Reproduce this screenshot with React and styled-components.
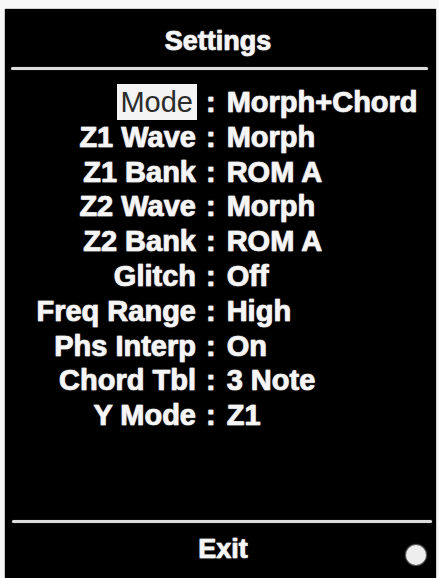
import React from "react";
import styled, { createGlobalStyle } from "styled-components";

const Global = createGlobalStyle`
  html, body { margin: 0; padding: 0; background: #f6f6f6; overflow: hidden; }
  body { font-family: "Liberation Sans", Arial, sans-serif; }
  #root { width: 439px; height: 578px; }
`;

const Frame = styled.div`
  width: 439px;
  height: 578px;
  padding: 9px 3px 0 5px;
  box-sizing: border-box;
  background: #f7f7f7;
`;

const Screen = styled.div`
  width: 431px;
  height: 569px;
  background: #000;
  display: flex;
  flex-direction: column;
  color: #f6f6f6;
  box-shadow: -1px 0 0 #c8c8c8, 1px 0 0 #d0d0d0, 0 -1px 0 #d0d0d0;
`;

const glow = `
  -webkit-text-stroke: 0.6px #f0f0f0;
  text-shadow: 0 0 1px rgba(255, 255, 255, 0.8), 0 0 2px rgba(255, 255, 255, 0.35);
`;

const Title = styled.div`
  padding-top: 16px;
  font-size: 27px;
  line-height: 32px;
  font-weight: 700;
  text-align: center;
  padding-right: 5px;
  ${glow}
`;

const Rule = styled.div`
  height: 3px;
  background: #dcdcdc;
  border-radius: 2px;
  margin: ${(p) => p.$m};
  box-shadow: 0 0 1px rgba(255, 255, 255, 0.5);
`;

const Rows = styled.div`
  margin-top: 15px;
  display: grid;
  grid-template-columns: 191px auto 1fr;
  column-gap: 10px;
  font-size: 29px;
  line-height: 34.8px;
  font-weight: 700;
  white-space: nowrap;
  ${glow}
`;

const Label = styled.div`
  text-align: right;
`;

const Selected = styled.span`
  background: #f4f4f4;
  color: #2c2c2c;
  font-weight: 400;
  padding: 2px 4px 2px 3px;
  margin-right: -1px;
  -webkit-text-stroke: 0;
  text-shadow: none;
`;

const Colon = styled.div``;

const Value = styled.div`
  margin-left: 1px;
`;

const Spacer = styled.div`
  flex: 1;
`;

const Footer = styled.div`
  margin-top: 10px;
  display: grid;
  grid-template-columns: 1fr auto 1fr;
  align-items: center;
`;

const FooterLabel = styled.div`
  grid-column: 2;
  font-size: 27px;
  line-height: 32px;
  font-weight: 700;
  padding-left: 5px;
  ${glow}
`;

const Dot = styled.div`
  justify-self: end;
  margin: 11px 10px 0 0;
  width: 20px;
  height: 20px;
  border-radius: 50%;
  background: #eeeeee;
  box-shadow: 0 0 1px 1px rgba(255, 255, 255, 0.4);
`;

const rows = [
  ["Mode", "Morph+Chord", true],
  ["Z1 Wave", "Morph"],
  ["Z1 Bank", "ROM A"],
  ["Z2 Wave", "Morph"],
  ["Z2 Bank", "ROM A"],
  ["Glitch", "Off"],
  ["Freq Range", "High"],
  ["Phs Interp", "On"],
  ["Chord Tbl", "3 Note"],
  ["Y Mode", "Z1"],
];

export default function App() {
  return (
    <>
      <Global />
      <Frame>
        <Screen>
          <Title>Settings</Title>
          <Rule $m="10px 8px 0 6px" />
          <Rows>
            {rows.map(([label, value, sel]) => (
              <React.Fragment key={label}>
                <Label>{sel ? <Selected>{label}</Selected> : label}</Label>
                <Colon>:</Colon>
                <Value>{value}</Value>
              </React.Fragment>
            ))}
          </Rows>
          <Spacer />
          <Rule $m="0 4px 0 7px" />
          <Footer>
            <FooterLabel>Exit</FooterLabel>
            <Dot />
          </Footer>
          <div style={{ height: 13 }} />
        </Screen>
      </Frame>
    </>
  );
}
